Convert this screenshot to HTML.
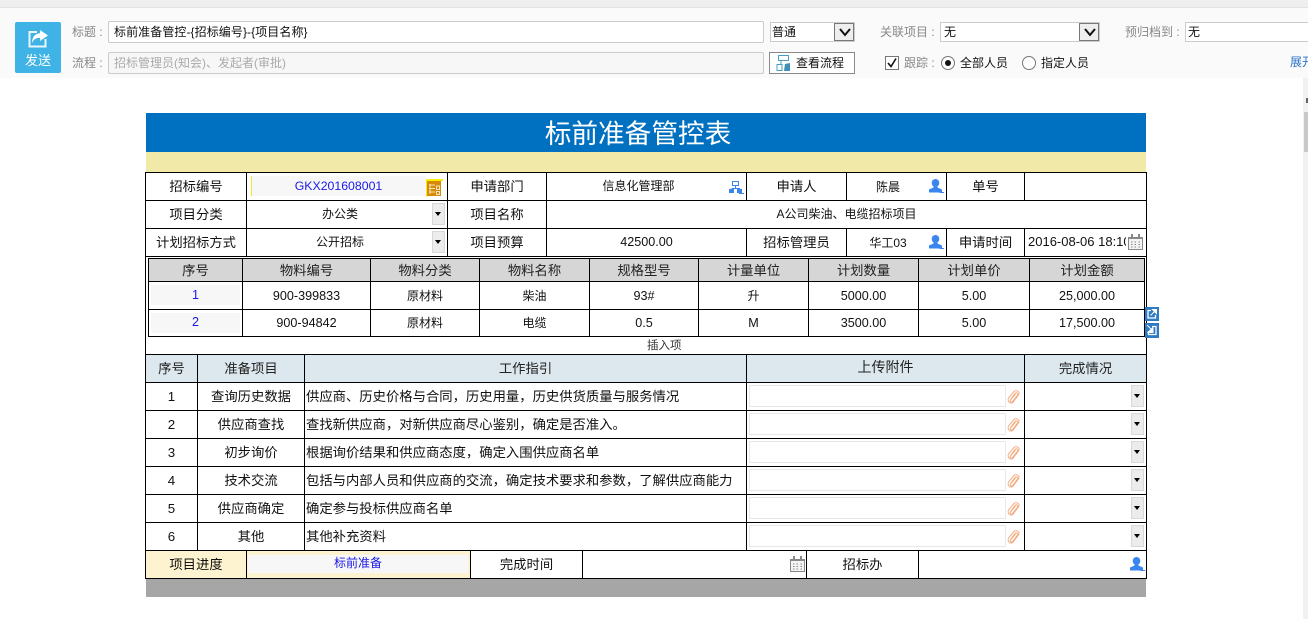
<!DOCTYPE html>
<html lang="zh"><head><meta charset="utf-8"><title>标前准备管控表</title>
<style>
html,body{margin:0;padding:0;background:#fff;width:1308px;height:619px;overflow:hidden}
body{position:relative;font-family:"Liberation Sans","Noto Sans CJK SC",sans-serif;font-size:13.33px;color:#111}
div,span,svg{position:absolute;box-sizing:border-box}
.c{border:1px solid #000;text-align:center;line-height:27px;white-space:nowrap;background:#fff}
.h{background:#d6d6d6;line-height:23px;color:#222}
.g{background:#dce8ed;color:#222}
.s{background:#f7f7f7}
.n{font-size:12.6px;line-height:28px}
.lb{color:#888;font-size:12px;line-height:20px;white-space:nowrap}
.tx{white-space:nowrap;line-height:20px}
.r{line-height:28px}
.w{text-align:left;padding-left:1px}
.dd{background:#ececec;border:1px solid #d8d8d8;width:13px;height:22px}
.dd:after{content:"";position:absolute;left:2px;top:8px;border-left:3.5px solid transparent;border-right:3.5px solid transparent;border-top:4px solid #000}
.up{background:#fff;border:1px solid #e8e8e8;left:749px;width:257px;height:22px}
.sel{background:#fff;border:1px solid #ccc}
.ar{background:#eee;border:1px solid #777;width:20px;top:0;bottom:0;right:0}
</style></head><body>
<svg width="0" height="0" style="left:0;top:0"><defs>
<symbol id="p" viewBox="0 0 15 14"><ellipse cx="6.500" cy="4" rx="3.800" ry="4" fill="#3b86ee"/><path d="M4.500 7h4v1.500l4.500 2v3H0v-3l4.500-2z" fill="#3b86ee"/><path d="M10.500 13.500h4.500" stroke="#3b86ee"/></symbol>
<symbol id="o" viewBox="0 0 15 13"><path d="M3.500 .5h6v4h-6zM6.500 4.500v3M2.500 7.500h8v1" fill="none" stroke="#3b86ee"/><path d="M0 8h5v4H0zM8 8h5v4H8z" fill="#3b86ee"/><path d="M10 12.500h5" stroke="#3b86ee"/></symbol>
<symbol id="k" viewBox="0 0 15 16"><path d="M.5 3.500h14v12H.5z" fill="#f3f3f3" stroke="#888"/><path d="M0 3h15v2H0zM3 0h2v3H3zM10 0h2v3h-2z" fill="#888"/><path d="M3 8h1.500M6.500 8H8M10.500 8H12M3 10.500h1.500M6.500 10.500H8M10.500 10.500H12M3 13h1.500M6.500 13H8M10.500 13H12" stroke="#888"/></symbol>
<symbol id="c" viewBox="0 0 13 14"><path d="M3.500 9.500 8 3.500c1.300-1.500 3.300-.2 2.500 1.500L5.500 11.500c-1 1.200-3 .1-2-1.500L8.500 4M1.500 8 7 1.500C9 -.5 13 1.500 11.800 4.500L6 12.300C4 14.500 0 12 1.500 8" fill="none" stroke="#f2ae85" stroke-width="1"/></symbol>
</defs></svg>

<!-- toolbar -->
<div style="left:0;top:0;width:1308px;height:8px;background:#efefef;border-bottom:1px solid #e2e2e2"></div>
<div style="left:0;top:8px;width:1308px;height:70px;background:#fafafa"></div>
<div style="left:15px;top:22px;width:46px;height:51px;background:#3fb3e6;border-radius:2px"></div>
<svg style="left:28px;top:29px" width="21" height="19" viewBox="0 0 21 19"><path d="M9 3H1.500v14.500h16V10" fill="none" stroke="#eaf6fc" stroke-width="2"/><path d="M12 1l8 5.500-8 5.500V8.800C8 8.800 5.500 10.500 4 14c0-6 3-9.500 8-9.800z" fill="#fff"/></svg>
<div class="tx" style="left:15px;top:51px;width:46px;text-align:center;color:#fff;font-size:13px">发送</div>
<div class="lb" style="left:72px;top:22px">标题 :</div>
<div class="lb" style="left:72px;top:53px">流程 :</div>
<div style="left:108px;top:21px;width:656px;height:22px;background:#fff;border:1px solid #ccc;border-radius:2px"></div>
<div class="tx" style="left:114px;top:22px;font-size:12px;color:#111;letter-spacing:.08px">标前准备管控-{招标编号}-{项目名称}</div>
<div style="left:108px;top:52px;width:656px;height:22px;background:#f7f7f7;border:1px solid #ccc;border-radius:2px"></div>
<div class="tx" style="left:114px;top:53px;font-size:12px;color:#aaa">招标管理员(知会)、发起者(审批)</div>

<div class="sel" style="left:770px;top:22px;width:85px;height:20px"><div class="ar"></div></div>
<svg style="left:839px;top:28px" width="12" height="9" viewBox="0 0 12 9"><path d="M1 1l5 6 5-6" fill="none" stroke="#111" stroke-width="2"/></svg>
<div class="tx" style="left:772px;top:22px;font-size:12px">普通</div>

<div class="lb" style="left:880px;top:22px">关联项目 :</div>
<div class="sel" style="left:940px;top:22px;width:160px;height:20px"><div class="ar"></div></div>
<svg style="left:1084px;top:28px" width="12" height="9" viewBox="0 0 12 9"><path d="M1 1l5 6 5-6" fill="none" stroke="#111" stroke-width="2"/></svg>
<div class="tx" style="left:944px;top:22px;font-size:12px">无</div>
<div class="lb" style="left:1125px;top:22px">预归档到 :</div>
<div class="sel" style="left:1185px;top:22px;width:130px;height:20px"></div>
<div class="tx" style="left:1188px;top:22px;font-size:12px">无</div>

<div style="left:769px;top:52px;width:86px;height:22px;background:#fff;border:1px solid #888"></div>
<svg style="left:775px;top:55px" width="17" height="17" viewBox="0 0 17 17"><path d="M3.500 .5h10v5h-10zM6 5.500v4M2 9.500h5v6H2z" fill="none" stroke="#4a9cc4"/><path d="M10 9l5-1v8h-6z" fill="#3f8fb8"/></svg>
<div class="tx" style="left:796px;top:53px;font-size:12px">查看流程</div>
<div style="left:885px;top:56px;width:14px;height:14px;background:#fff;border:1px solid #777"></div>
<svg style="left:887px;top:58px" width="10" height="10" viewBox="0 0 10 10"><path d="M1 5l3 3.500L9 .5" fill="none" stroke="#111" stroke-width="1.600"/></svg>
<div class="lb" style="left:904px;top:53px">跟踪 :</div>
<div style="left:941px;top:56px;width:14px;height:14px;border-radius:50%;background:#fff;border:1px solid #777"></div>
<div style="left:945px;top:60px;width:6px;height:6px;border-radius:50%;background:#111"></div>
<div class="tx" style="left:960px;top:53px;font-size:12px">全部人员</div>
<div style="left:1022px;top:56px;width:14px;height:14px;border-radius:50%;background:#fff;border:1px solid #777"></div>
<div class="tx" style="left:1041px;top:53px;font-size:12px">指定人员</div>
<div class="tx" style="left:1290px;top:52px;font-size:12px;color:#2a74c4">展开</div>

<!-- scrollbar -->
<div style="left:1303px;top:78px;width:5px;height:541px;background:#f1f1f1"></div>
<div style="left:1306px;top:98px;width:2px;height:5px;background:#666"></div>
<div style="left:1304px;top:112px;width:4px;height:40px;background:#c8c8c8"></div>

<!-- title -->
<div style="left:146px;top:113px;width:1000px;height:39px;background:#0070c0;color:#fff;font-size:26.67px;line-height:43px;text-align:center;padding-right:16px">标前准备管控表</div>
<div style="left:146px;top:152px;width:1000px;height:20px;background:#f0e9a8"></div>

<!-- form rows -->
<div class="c" style="left:145px;top:172px;width:102px;height:29px">招标编号</div>
<div class="c" style="left:246px;top:172px;width:202px;height:29px"></div>
<div class="c" style="left:447px;top:172px;width:100px;height:29px">申请部门</div>
<div class="c" style="left:546px;top:172px;width:201px;height:29px"></div>
<div class="c" style="left:746px;top:172px;width:101px;height:29px">申请人</div>
<div class="c" style="left:846px;top:172px;width:101px;height:29px"></div>
<div class="c" style="left:946px;top:172px;width:79px;height:29px">单号</div>
<div class="c" style="left:1024px;top:172px;width:123px;height:29px"></div>

<div class="s" style="left:251px;top:176px;width:175px;height:20px;border-left:1px solid #f5ea20"></div>
<div class="tx" style="left:251px;top:176px;width:175px;text-align:center;color:#1a1ae6;font-size:12.3px">GKX201608001</div>
<div style="left:426px;top:179px;width:17px;height:2px;background:#ffee00"></div>
<div style="left:426px;top:179px;width:1px;height:18px;background:#ffee00"></div>
<svg style="left:427px;top:181px" width="14" height="15" viewBox="0 0 14 15"><path d="M0 0h14v15H0z" fill="#d68a0a"/><path d="M2 4h6M2 7.500h6M2 11h6M3 3v10M9.500 5h3v3.500h-3zM9.500 10.500h3v3h-3z" fill="none" stroke="#f7e6bd"/></svg>
<div class="tx" style="left:546px;top:176px;width:185px;text-align:center;font-size:12px">信息化管理部</div>
<svg style="left:729px;top:181px" width="15" height="13"><use href="#o"/></svg>
<div class="tx" style="left:846px;top:177px;width:84px;text-align:center;font-size:12px">陈晨</div>
<svg style="left:929px;top:179px" width="15" height="14"><use href="#p"/></svg>

<div class="c" style="left:145px;top:200px;width:102px;height:29px">项目分类</div>
<div class="c" style="left:246px;top:200px;width:202px;height:29px"></div>
<div class="tx" style="left:246px;top:204px;width:188px;text-align:center;font-size:12px">办公类</div>
<div class="dd" style="left:432px;top:203px"></div>
<div class="c" style="left:447px;top:200px;width:100px;height:29px">项目名称</div>
<div class="c" style="left:546px;top:200px;width:601px;height:29px;font-size:12px;line-height:26px">A公司柴油、电缆招标项目</div>

<div class="c" style="left:145px;top:228px;width:102px;height:29px">计划招标方式</div>
<div class="c" style="left:246px;top:228px;width:202px;height:29px"></div>
<div class="tx" style="left:246px;top:232px;width:188px;text-align:center;font-size:12px">公开招标</div>
<div class="dd" style="left:432px;top:231px"></div>
<div class="c" style="left:447px;top:228px;width:100px;height:29px">项目预算</div>
<div class="c" style="left:546px;top:228px;width:201px;height:29px;font-size:12.6px;line-height:27px">42500.00</div>
<div class="c" style="left:746px;top:228px;width:101px;height:29px">招标管理员</div>
<div class="c" style="left:846px;top:228px;width:101px;height:29px"></div>
<div class="tx" style="left:846px;top:233px;width:84px;text-align:center;font-size:12px">华工03</div>
<svg style="left:929px;top:235px" width="15" height="14"><use href="#p"/></svg>
<div class="c" style="left:946px;top:228px;width:79px;height:29px">申请时间</div>
<div class="c" style="left:1024px;top:228px;width:123px;height:29px"></div>
<div class="tx" style="left:1028px;top:232px;width:98px;overflow:hidden;font-size:13px">2016-08-06 18:10</div>
<svg style="left:1128px;top:234px" width="15" height="16"><use href="#k"/></svg>

<!-- outer frame for material section -->
<div style="left:145px;top:256px;width:1002px;height:99px;border:1px solid #000"></div>

<!-- material table -->
<div class="c h" style="left:148px;top:258px;width:95px;height:24px">序号</div>
<div class="c h" style="left:242px;top:258px;width:129px;height:24px">物料编号</div>
<div class="c h" style="left:370px;top:258px;width:110px;height:24px">物料分类</div>
<div class="c h" style="left:479px;top:258px;width:111px;height:24px">物料名称</div>
<div class="c h" style="left:589px;top:258px;width:110px;height:24px">规格型号</div>
<div class="c h" style="left:698px;top:258px;width:111px;height:24px">计量单位</div>
<div class="c h" style="left:808px;top:258px;width:111px;height:24px">计划数量</div>
<div class="c h" style="left:918px;top:258px;width:112px;height:24px">计划单价</div>
<div class="c h" style="left:1029px;top:258px;width:116px;height:24px">计划金额</div>

<div class="c" style="left:148px;top:281px;width:95px;height:29px"></div>
<div class="s" style="left:151px;top:285px;width:89px;height:20px"></div>
<div class="tx" style="left:151px;top:285px;width:89px;text-align:center;color:#1a1ae6;font-size:12.6px">1</div>
<div class="c n" style="left:242px;top:281px;width:129px;height:29px">900-399833</div>
<div class="c r" style="left:370px;top:281px;width:110px;height:29px;font-size:12px">原材料</div>
<div class="c r" style="left:479px;top:281px;width:111px;height:29px;font-size:12px">柴油</div>
<div class="c n" style="left:589px;top:281px;width:110px;height:29px">93#</div>
<div class="c r" style="left:698px;top:281px;width:111px;height:29px;font-size:12px">升</div>
<div class="c n" style="left:808px;top:281px;width:111px;height:29px">5000.00</div>
<div class="c n" style="left:918px;top:281px;width:112px;height:29px">5.00</div>
<div class="c n" style="left:1029px;top:281px;width:116px;height:29px">25,000.00</div>

<div class="c" style="left:148px;top:309px;width:95px;height:28px"></div>
<div class="s" style="left:151px;top:313px;width:89px;height:20px"></div>
<div class="tx" style="left:151px;top:312px;width:89px;text-align:center;color:#1a1ae6;font-size:12.6px">2</div>
<div class="c n" style="left:242px;top:309px;width:129px;height:28px;line-height:26px">900-94842</div>
<div class="c" style="left:370px;top:309px;width:110px;height:28px;font-size:12px;line-height:26px">原材料</div>
<div class="c" style="left:479px;top:309px;width:111px;height:28px;font-size:12px;line-height:26px">电缆</div>
<div class="c n" style="left:589px;top:309px;width:110px;height:28px;line-height:26px">0.5</div>
<div class="c n" style="left:698px;top:309px;width:111px;height:28px;line-height:26px">M</div>
<div class="c n" style="left:808px;top:309px;width:111px;height:28px;line-height:26px">3500.00</div>
<div class="c n" style="left:918px;top:309px;width:112px;height:28px;line-height:26px">5.00</div>
<div class="c n" style="left:1029px;top:309px;width:116px;height:28px;line-height:26px">17,500.00</div>

<svg style="left:1145px;top:307px" width="14" height="14" viewBox="0 0 14 14"><path d="M0 0h14v14H0z" fill="#2f7ac4"/><path d="M6 3.500H3v7.500h7.500V8" fill="none" stroke="#fff" stroke-width="1.300"/><path d="M5.500 8.500l4-4M7.500 2.500h4v4z" stroke="#fff" fill="#fff"/></svg>
<svg style="left:1145px;top:323px" width="14" height="15" viewBox="0 0 14 15"><path d="M0 0h14v15H0z" fill="#2f7ac4"/><path d="M7 3.500h4v8H3.500V8" fill="none" stroke="#fff" stroke-width="1.300"/><path d="M2 2l4.500 4.500M8 4.500v5H3z" stroke="#fff" fill="#fff"/></svg>
<div class="tx" style="left:647px;top:336px;font-size:11.5px;color:#333">插入项</div>

<!-- prep header -->
<div class="c g" style="left:145px;top:354px;width:53px;height:29px">序号</div>
<div class="c g" style="left:197px;top:354px;width:108px;height:29px">准备项目</div>
<div class="c g" style="left:304px;top:354px;width:443px;height:29px">工作指引</div>
<div class="c g" style="left:746px;top:354px;width:279px;height:29px;font-size:14px;line-height:25px">上传附件</div>
<div class="c g" style="left:1024px;top:354px;width:123px;height:29px">完成情况</div>

<!-- row 1 -->
<div class="c r" style="left:145px;top:382px;width:53px;height:29px">1</div>
<div class="c r" style="left:197px;top:382px;width:108px;height:29px">查询历史数据</div>
<div class="c r w" style="left:304px;top:382px;width:443px;height:29px">供应商、历史价格与合同，历史用量，历史供货质量与服务情况</div>
<div class="c" style="left:746px;top:382px;width:279px;height:29px"></div>
<div class="c" style="left:1024px;top:382px;width:123px;height:29px"></div>
<div class="up" style="top:385px"></div>
<svg style="left:1007px;top:390px" width="13" height="14"><use href="#c"/></svg>
<div class="dd" style="left:1131px;top:385px"></div>
<!-- row 2 -->
<div class="c r" style="left:145px;top:410px;width:53px;height:29px">2</div>
<div class="c r" style="left:197px;top:410px;width:108px;height:29px">供应商查找</div>
<div class="c r w" style="left:304px;top:410px;width:443px;height:29px">查找新供应商，对新供应商尽心鉴别，确定是否准入。</div>
<div class="c" style="left:746px;top:410px;width:279px;height:29px"></div>
<div class="c" style="left:1024px;top:410px;width:123px;height:29px"></div>
<div class="up" style="top:413px"></div>
<svg style="left:1007px;top:418px" width="13" height="14"><use href="#c"/></svg>
<div class="dd" style="left:1131px;top:413px"></div>
<!-- row 3 -->
<div class="c r" style="left:145px;top:438px;width:53px;height:29px">3</div>
<div class="c r" style="left:197px;top:438px;width:108px;height:29px">初步询价</div>
<div class="c r w" style="left:304px;top:438px;width:443px;height:29px">根据询价结果和供应商态度，确定入围供应商名单</div>
<div class="c" style="left:746px;top:438px;width:279px;height:29px"></div>
<div class="c" style="left:1024px;top:438px;width:123px;height:29px"></div>
<div class="up" style="top:441px"></div>
<svg style="left:1007px;top:446px" width="13" height="14"><use href="#c"/></svg>
<div class="dd" style="left:1131px;top:441px"></div>
<!-- row 4 -->
<div class="c r" style="left:145px;top:466px;width:53px;height:29px">4</div>
<div class="c r" style="left:197px;top:466px;width:108px;height:29px">技术交流</div>
<div class="c r w" style="left:304px;top:466px;width:443px;height:29px">包括与内部人员和供应商的交流，确定技术要求和参数，了解供应商能力</div>
<div class="c" style="left:746px;top:466px;width:279px;height:29px"></div>
<div class="c" style="left:1024px;top:466px;width:123px;height:29px"></div>
<div class="up" style="top:469px"></div>
<svg style="left:1007px;top:474px" width="13" height="14"><use href="#c"/></svg>
<div class="dd" style="left:1131px;top:469px"></div>
<!-- row 5 -->
<div class="c r" style="left:145px;top:494px;width:53px;height:29px">5</div>
<div class="c r" style="left:197px;top:494px;width:108px;height:29px">供应商确定</div>
<div class="c r w" style="left:304px;top:494px;width:443px;height:29px">确定参与投标供应商名单</div>
<div class="c" style="left:746px;top:494px;width:279px;height:29px"></div>
<div class="c" style="left:1024px;top:494px;width:123px;height:29px"></div>
<div class="up" style="top:497px"></div>
<svg style="left:1007px;top:502px" width="13" height="14"><use href="#c"/></svg>
<div class="dd" style="left:1131px;top:497px"></div>
<!-- row 6 -->
<div class="c r" style="left:145px;top:522px;width:53px;height:29px">6</div>
<div class="c r" style="left:197px;top:522px;width:108px;height:29px">其他</div>
<div class="c r w" style="left:304px;top:522px;width:443px;height:29px">其他补充资料</div>
<div class="c" style="left:746px;top:522px;width:279px;height:29px"></div>
<div class="c" style="left:1024px;top:522px;width:123px;height:29px"></div>
<div class="up" style="top:525px"></div>
<svg style="left:1007px;top:530px" width="13" height="14"><use href="#c"/></svg>
<div class="dd" style="left:1131px;top:525px"></div>

<!-- progress row -->
<div class="c" style="left:145px;top:550px;width:102px;height:29px;background:#fdf3d0">项目进度</div>
<div class="c" style="left:246px;top:550px;width:225px;height:29px;background:#fdf3d0"></div>
<div class="s" style="left:248px;top:555px;width:220px;height:18px"></div>
<div class="tx" style="left:248px;top:553px;width:220px;text-align:center;color:#1a1ae6;font-size:12px">标前准备</div>
<div class="c" style="left:470px;top:550px;width:113px;height:29px">完成时间</div>
<div class="c" style="left:582px;top:550px;width:225px;height:29px"></div>
<svg style="left:790px;top:556px" width="15" height="16"><use href="#k"/></svg>
<div class="c" style="left:806px;top:550px;width:113px;height:29px">招标办</div>
<div class="c" style="left:918px;top:550px;width:229px;height:29px"></div>
<svg style="left:1130px;top:557px" width="15" height="14"><use href="#p"/></svg>
<div style="left:146px;top:579px;width:1000px;height:18px;background:#a6a6a6"></div>
</body></html>
